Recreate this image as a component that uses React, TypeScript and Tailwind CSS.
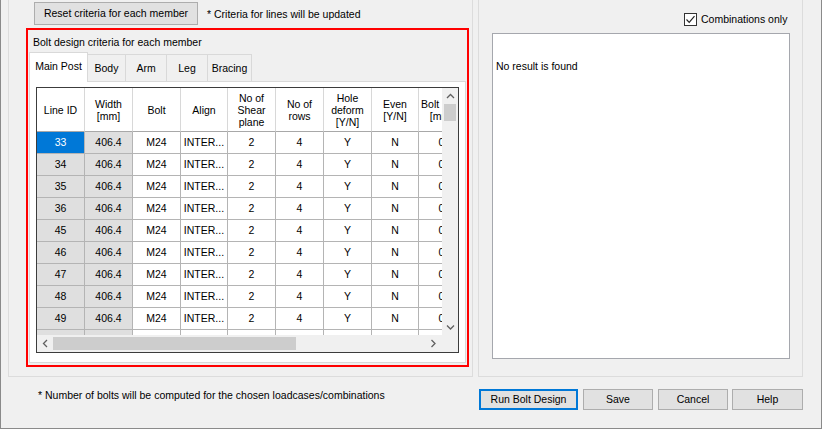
import React from "react";

const ids = [33, 34, 35, 36, 45, 46, 47, 48, 49];
const widths = ["w-[48px]", "w-[48px]", "w-[48px]", "w-[47px]", "w-[48px]", "w-[48px]", "w-[48px]", "w-[47px]", "w-[46px]"];
const headers = ["Line ID", "Width\n[mm]", "Bolt", "Align", "No of\nShear\nplane", "No of\nrows", "Hole\ndeform\n[Y/N]", "Even\n[Y/N]", "Bolt hole\n[mm]"];
const values = ["", "406.4", "M24", "INTER...", "2", "4", "Y", "N", "0"];

function Chevron({ dir }: { dir: "up" | "down" | "left" | "right" }) {
  const pts =
    dir === "up" ? "1,5 4.5,1.5 8,5" : dir === "down" ? "1,1.5 4.5,5 8,1.5" : dir === "left" ? "5,1 1.5,4.5 5,8" : "1.5,1 5,4.5 1.5,8";
  const w = dir === "up" || dir === "down" ? 9 : 7;
  const h = dir === "up" || dir === "down" ? 7 : 9;
  return (
    <svg width={w} height={h} viewBox={`0 0 ${w} ${h}`}>
      <polyline points={pts} fill="none" stroke="#606060" strokeWidth="1.3" />
    </svg>
  );
}

function Btn({ children, w, def }: { children: React.ReactNode; w: string; def?: boolean }) {
  return (
    <div
      className={`${w} h-[21px] flex items-center justify-center bg-[#e1e1e1] border ${
        def ? "border-[#0078d7] shadow-[inset_0_0_0_1px_#0078d7]" : "border-[#adadad]"
      }`}
    >
      {children}
    </div>
  );
}

export default function App() {
  return (
    <div className="w-[825px] h-[433px] bg-white font-['Liberation_Sans',Arial,sans-serif] text-[10.5px] text-black">
      <div className="w-[822px] h-[429px] bg-[#f0f0f0] border-r border-b border-l border-[#8a8a8a] flex flex-col">
        {/* top area */}
        <div className="flex h-[377px]">
          {/* left group */}
          <div className="ml-[7px] w-[465px] h-full border-l border-r border-b border-[#dcdcdc] flex flex-col">
            <div className="flex items-center mt-[2px]">
              <div className="ml-[25px] w-[164px] h-[23px] bg-[#e1e1e1] border border-[#adadad] flex items-center justify-center">
                Reset criteria for each member
              </div>
              <div className="ml-[9px] mt-[2px]">* Criteria for lines will be updated</div>
            </div>
            {/* red box */}
            <div className="ml-[17px] mt-[3px] w-[443px] h-[339px] border-2 border-[#ff0000] flex flex-col">
              <div className="h-[22px] pl-[5px] pt-[5px] leading-[14px]">Bolt design criteria for each member</div>
              <div className="ml-[1px] w-[437px] flex flex-col">
                <div className="flex items-end h-[30px]">
                  <div className="relative z-10 w-[59px] h-[30px] bg-white border-l border-t border-r border-[#d9d9d9] flex items-center justify-center pb-[2px]">
                    Main Post
                  </div>
                  <div className="w-[38px] h-[28px] border-t border-r border-[#d9d9d9] flex items-center justify-center">Body</div>
                  <div className="w-[41px] h-[28px] border-t border-r border-[#d9d9d9] flex items-center justify-center">Arm</div>
                  <div className="w-[41px] h-[28px] border-t border-r border-[#d9d9d9] flex items-center justify-center">Leg</div>
                  <div className="w-[44px] h-[28px] border-t border-r border-[#d9d9d9] flex items-center justify-center">Bracing</div>
                </div>
                <div className="-mt-[1px] h-[282px] bg-white border border-[#d9d9d9]">
                  {/* grid */}
                  <div className="ml-[6px] mt-[5px] w-[423px] h-[266px] border border-[#3c3c3c] flex flex-col">
                    <div className="flex h-[247px]">
                      <div className="w-[405px] h-full overflow-hidden bg-white">
                        <div className="flex">
                          {headers.map((h, i) => (
                            <div
                              key={i}
                              className={`${widths[i]} shrink-0 h-[44px] border-r border-r-[#d8d8d8] border-b border-b-[#a8a8a8] flex items-center justify-center text-center leading-[12px] whitespace-pre`}
                            >
                              {h}
                            </div>
                          ))}
                        </div>
                        {[...ids, 0].map((id, r) => (
                          <div key={r} className="flex">
                            {values.map((v, i) => {
                              const bg =
                                id !== 0 && i === 0 && r === 0
                                  ? "bg-[#0078d7] text-white"
                                  : i < 2
                                  ? "bg-[#dfdfdf]"
                                  : "bg-white";
                              return (
                                <div
                                  key={i}
                                  className={`${widths[i]} shrink-0 h-[22px] border-r border-b border-[#b4b4b4] flex items-center justify-center whitespace-nowrap overflow-hidden ${bg}`}
                                >
                                  {id === 0 ? "" : i === 0 ? String(id) : v}
                                </div>
                              );
                            })}
                          </div>
                        ))}
                      </div>
                      {/* vertical scrollbar */}
                      <div className="w-[16px] h-full bg-[#f0f0f0] flex flex-col">
                        <div className="h-[16px] flex items-center justify-center">
                          <Chevron dir="up" />
                        </div>
                        <div className="mx-[2px] h-[17px] bg-[#cdcdcd]" />
                        <div className="flex-1" />
                        <div className="h-[16px] flex items-center justify-center">
                          <Chevron dir="down" />
                        </div>
                      </div>
                    </div>
                    {/* horizontal scrollbar */}
                    <div className="h-[17px] flex bg-[#f0f0f0]">
                      <div className="w-[16px] flex items-center justify-center">
                        <Chevron dir="left" />
                      </div>
                      <div className="my-[2px] w-[243px] bg-[#cdcdcd]" />
                      <div className="flex-1" />
                      <div className="w-[17px] flex items-center justify-center">
                        <Chevron dir="right" />
                      </div>
                      <div className="w-[16px]" />
                    </div>
                  </div>
                </div>
              </div>
            </div>
          </div>
          {/* right group */}
          <div className="ml-[5px] w-[325px] h-full border-l border-r border-b border-[#dcdcdc] flex flex-col">
            <div className="mt-[13px] pl-[205px] flex items-center h-[13px]">
              <div className="w-[13px] h-[13px] border border-[#333333] bg-white flex items-center justify-center">
                <svg width="11" height="11" viewBox="0 0 11 11">
                  <polyline points="1.5,5.5 4.2,8.3 9.5,2.2" fill="none" stroke="#222222" strokeWidth="1.2" />
                </svg>
              </div>
              <div className="ml-[4px]">Combinations only</div>
            </div>
            <div className="ml-[13px] mt-[7px] w-[298px] h-[326px] bg-white border border-[#a5a7ad] pl-[3px] pt-[25px] leading-[14px]">
              No result is found
            </div>
          </div>
        </div>
        {/* bottom */}
        <div className="flex items-start mt-[12px]">
          <div className="w-[478px] pl-[37px] -mt-[1px] leading-[14px]">
            * Number of bolts will be computed for the chosen loadcases/combinations
          </div>
          <Btn w="w-[99px]" def>
            Run Bolt Design
          </Btn>
          <div className="ml-[5px]">
            <Btn w="w-[70px]">Save</Btn>
          </div>
          <div className="ml-[5px]">
            <Btn w="w-[70px]">Cancel</Btn>
          </div>
          <div className="ml-[4px]">
            <Btn w="w-[71px]">Help</Btn>
          </div>
        </div>
      </div>
    </div>
  );
}
